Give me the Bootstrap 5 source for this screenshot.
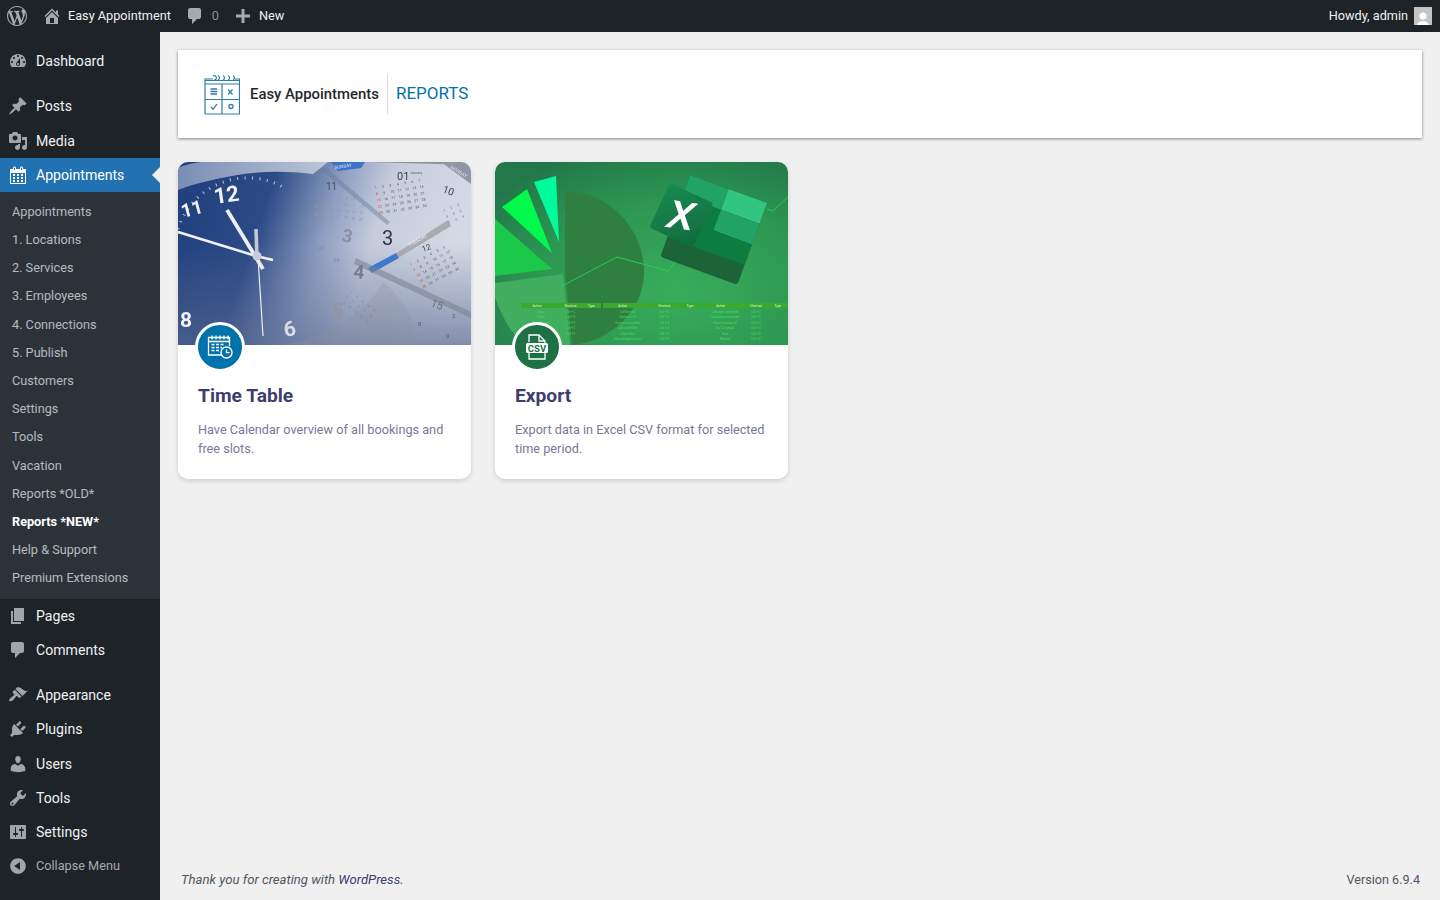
<!DOCTYPE html>
<html lang="en">
  <head>
    <meta charset="UTF-8" />
    <meta name="viewport" content="width=device-width, initial-scale=1.0" />
    <title>Reports - Easy Appointments</title>
    <link href="https://cdn.jsdelivr.net/npm/bootstrap@5.3.3/dist/css/bootstrap.min.css" rel="stylesheet" />
    <script src="https://cdn.jsdelivr.net/npm/bootstrap@5.3.3/dist/js/bootstrap.bundle.min.js"></script>
    <style>
      body { background: #f0f0f1; font-family: Roboto, "Liberation Sans", sans-serif; color: #3c434a; overflow: hidden; }
      .ico { fill: currentColor; flex: none; }

      .adminbar { height: 32px; background: #1d2327; color: #f0f0f1; font-size: 12.7px; }
      .adminbar .ico { color: #a7aaad; }
      .adminbar .muted { color: #8c9196; }
      .bar-wp { margin-left: 7px; }
      .bar-home { margin-left: 15px; }
      .bar-label { margin-left: 6px; }
      .bar-next { margin-left: 14px; }
      .bar-count { margin-left: 7px; }
      .avatar { width: 18px; height: 18px; background: #c4c4c4; overflow: hidden; margin-left: 6px; margin-right: 8px; }

      .page { height: 868px; }
      .sidebar { width: 160px; background: #1d2327; padding-top: 12px; }
      .menu { color: #f0f0f1; font-size: 14.1px; line-height: 1; }
      .menu-item { height: 34.25px; padding-left: 8px; gap: 8px; color: #f0f0f1; text-decoration: none; }
      .menu-item .ico { color: #a0a5aa; }
      .menu-item.current { background: #2271b1; color: #fff; }
      .menu-item.current .ico { color: #fff; }
      .menu-item.collapse-btn { color: #a7aaad; font-size: 12.7px; }
      .arrow { position: absolute; right: 0; top: 50%; margin-top: -8px; border: 8px solid transparent; border-right-color: #f0f0f1; border-left-width: 0; }
      .sep { height: 11px; }
      .submenu { background: #2c3338; padding: 5.9px 0 6.1px; }
      .submenu a { display: block; height: 28.2px; line-height: 28.2px; padding-left: 12px; font-size: 12.7px; color: rgba(240, 246, 252, .7); text-decoration: none; }
      .submenu a.on { color: #fff; font-weight: 700; }

      .content { padding: 18px 18px 0; min-width: 0; }
      .head-box { height: 88px; padding-left: 26px; margin-bottom: 24px; box-shadow: 0 1px 3px rgba(0, 0, 0, .45); }
      .brand { font-size: 14.9px; font-weight: 500; color: #23282d; padding-right: 8px; margin-left: 10px; line-height: 40px; border-right: 1px solid #dcdcde; }
      .head-title { font-size: 17px; color: #0073aa; margin-left: 8px; }

      .rep-card { border: 0; border-radius: 10px; height: 317px; overflow: hidden; box-shadow: 0 2px 5px rgba(0, 0, 0, .14); }
      .rep-pic { display: block; width: 293px; height: 183px; }
      .rep-badge { position: absolute; left: 17px; top: 160px; width: 50px; height: 50px; border: 3px solid #fff; }
      .bg-blue { background: #0073aa; }
      .bg-green { background: #1e7145; }
      .rep-body { padding: 39px 20px 0; }
      .rep-title { font-size: 19.2px; font-weight: 700; color: #3d3d6e; line-height: 24px; margin-bottom: 12px; }
      .rep-text { font-size: 12.7px; line-height: 19px; color: #78789a; margin: 0; }

      .foot { color: #50575e; padding: 0 2px 10px 3px; }
      .foot-note { font-size: 13.15px; }
      .foot-ver { font-size: 12.6px; }
      .foot a { color: #3d3d6e; text-decoration: none; }
    </style>
  </head>

  <body>
    <svg width="0" height="0" class="position-absolute">
      <symbol id="i-wp" viewBox="0 0 20 20"><path d="M20 10c0-5.51-4.49-10-10-10C4.48 0 0 4.49 0 10c0 5.52 4.48 10 10 10 5.51 0 10-4.48 10-10zM7.78 15.37L4.37 6.22c.55-.02 1.17-.08 1.17-.08.5-.06.44-1.13-.06-1.11 0 0-1.45.11-2.37.11-.18 0-.37 0-.58-.01C4.12 2.69 6.87 1.11 10 1.11c2.33 0 4.45.87 6.05 2.34-.68-.11-1.65.39-1.65 1.58 0 .74.45 1.36.9 2.1.35.61.55 1.36.55 2.46 0 1.49-1.4 5-1.4 5l-3.03-8.37c.54-.02.82-.17.82-.17.5-.05.44-1.25-.06-1.22 0 0-1.44.12-2.38.12-.87 0-2.33-.12-2.33-.12-.5-.03-.56 1.2-.06 1.22l.92.08 1.26 3.41zM17.41 10c.24-.64.74-1.87.43-4.25.7 1.29 1.05 2.71 1.05 4.25 0 3.29-1.73 6.24-4.4 7.78.97-2.59 1.94-5.2 2.92-7.78zM6.1 18.09C3.12 16.65 1.11 13.53 1.11 10c0-1.3.23-2.48.72-3.59C3.25 10.3 4.67 14.2 6.1 18.09zm4.03-6.63l2.58 6.98c-.86.29-1.76.45-2.71.45-.79 0-1.57-.11-2.29-.33.81-2.38 1.62-4.74 2.42-7.1z"/></symbol>
      <symbol id="i-home" viewBox="0 0 20 20"><path d="M16 8.5l1.53 1.53-1.06 1.06L10 4.62l-6.47 6.47-1.06-1.06L10 2.5l4 4v-2h2v4zm-6-2.46l6 5.99V18H4v-5.97zM12 17v-5H8v5h4z"/></symbol>
      <symbol id="i-comment" viewBox="0 0 20 20"><path d="M5 2h9c1.1 0 2 .9 2 2v7c0 1.1-.9 2-2 2h-2l-5 5v-5H5c-1.1 0-2-.9-2-2V4c0-1.1.9-2 2-2z"/></symbol>
      <symbol id="i-plus" viewBox="0 0 20 20"><path d="M17 8.5v3h-5.5V17h-3v-5.5H3v-3h5.5V3h3v5.5z"/></symbol>
      <symbol id="i-dash" viewBox="0 0 20 20"><path d="M3.76 16h12.48c1.1-1.37 1.76-3.11 1.76-5 0-4.42-3.58-8-8-8s-8 3.58-8 8c0 1.89.66 3.63 1.76 5zM10 4c.55 0 1 .45 1 1s-.45 1-1 1-1-.45-1-1 .45-1 1-1zM6 6c.55 0 1 .45 1 1s-.45 1-1 1-1-.45-1-1 .45-1 1-1zm8 0c.55 0 1 .45 1 1s-.45 1-1 1-1-.45-1-1 .45-1 1-1zm-5.37 5.55L12 7v6c0 1.1-.9 2-2 2s-2-.9-2-2c0-.57.24-1.08.63-1.45zM4 10c.55 0 1 .45 1 1s-.45 1-1 1-1-.45-1-1 .45-1 1-1zm12 0c.55 0 1 .45 1 1s-.45 1-1 1-1-.45-1-1 .45-1 1-1zm-5 3c0-.55-.45-1-1-1s-1 .45-1 1 .45 1 1 1 1-.45 1-1z"/></symbol>
      <symbol id="i-pin" viewBox="0 0 20 20"><path d="M10.44 3.02l1.82-1.82 6.36 6.35-1.83 1.82c-1.05-.68-2.48-.57-3.41.36l-.75.75c-.92.93-1.04 2.35-.35 3.41l-1.83 1.82-2.41-2.41-2.8 2.79c-.42.42-3.38 2.71-3.8 2.29s1.86-3.39 2.28-3.81l2.79-2.79L4.1 9.36l1.83-1.82c1.05.69 2.48.57 3.4-.36l.75-.75c.93-.92 1.05-2.35.36-3.41z"/></symbol>
      <symbol id="i-media" viewBox="0 0 20 20"><path d="M13 11V4c0-.55-.45-1-1-1h-1.67L9 1H5L3.67 3H2c-.55 0-1 .45-1 1v7c0 .55.45 1 1 1h10c.55 0 1-.45 1-1zM7 4.5c1.38 0 2.5 1.12 2.5 2.5S8.38 9.5 7 9.5 4.5 8.38 4.5 7 5.62 4.5 7 4.5zM14 6h5v10.5c0 1.38-1.12 2.5-2.5 2.5S14 17.88 14 16.5s1.12-2.5 2.5-2.5c.17 0 .34.02.5.05V9h-3V6zm-4 8.05V13h2v3.5c0 1.38-1.12 2.5-2.5 2.5S7 17.88 7 16.5 8.12 14 9.5 14c.17 0 .34.02.5.05z"/></symbol>
      <symbol id="i-cal" viewBox="0 0 20 20"><path d="M15 4h3v15H2V4h3V3c0-.41.15-.76.44-1.06.29-.29.65-.44 1.06-.44s.77.15 1.06.44c.29.3.44.65.44 1.06v1h4V3c0-.41.15-.76.44-1.06.29-.29.65-.44 1.06-.44s.77.15 1.06.44c.29.3.44.65.44 1.06v1zM6 5h1V3c0-.13-.05-.25-.15-.35-.09-.1-.21-.15-.35-.15s-.26.05-.35.15c-.1.1-.15.22-.15.35v2zm7 0h1V3c0-.13-.05-.25-.15-.35-.09-.1-.21-.15-.35-.15s-.26.05-.35.15c-.1.1-.15.22-.15.35v2zm4 13V8H3v10h14zM7 9v2H5V9h2zm2 0h2v2H9V9zm4 2V9h2v2h-2zm-6 1v2H5v-2h2zm2 0h2v2H9v-2zm4 2v-2h2v2h-2zm-6 1v2H5v-2h2zm4 2H9v-2h2v2zm4 0h-2v-2h2v2z"/></symbol>
      <symbol id="i-page" viewBox="0 0 20 20"><path d="M6 15V2h10v13H6zm-1 1h8v2H3V5h2v11z"/></symbol>
      <symbol id="i-brush" viewBox="0 0 20 20"><path d="M14.48 11.06L7.41 3.99l1.5-1.5c.5-.56 2.3-.47 3.51.32 1.21.8 1.43 1.28 2.91 2.1 1.18.64 2.45 1.26 4.45.85zm-.71.71L6.7 4.7 4.93 6.47c-.39.39-.39 1.02 0 1.41l1.06 1.06c.39.39.39 1.03 0 1.42-.6.6-1.43 1.11-2.21 1.69-.35.26-.7.53-1.01.84C1.43 13.23.91 15.24 1.2 16.2c.96.29 2.97-.23 4.31-1.57.31-.31.58-.66.85-1.02.58-.78 1.09-1.6 1.69-2.2.39-.39 1.02-.39 1.41 0l1.06 1.06c.39.39 1.02.39 1.41 0z"/></symbol>
      <symbol id="i-plug" viewBox="0 0 20 20"><path d="M13.11 4.36L9.87 7.6 8 5.73l3.24-3.24c.35-.34 1.05-.2 1.56.32.52.51.66 1.21.31 1.55zm-8 1.77l.91-1.12 9.01 9.01-1.19.84c-.71.71-2.63 1.16-3.82 1.16H6.14L4.9 17.26c-.59.59-1.54.59-2.12 0-.59-.58-.59-1.53 0-2.12l1.24-1.24v-3.88c0-1.13.4-3.19 1.09-3.89zm7.26 3.97l3.24-3.24c.34-.35 1.04-.21 1.55.31.52.51.66 1.21.31 1.55l-3.24 3.25z"/></symbol>
      <symbol id="i-user" viewBox="0 0 20 20"><path d="M10 9.25c-2.27 0-2.73-3.44-2.73-3.44C7 4.02 7.82 2 9.97 2c2.16 0 2.98 2.02 2.71 3.81 0 0-.41 3.44-2.68 3.44zm0 2.57L12.72 10c2.39 0 4.52 2.33 4.52 4.53v2.49s-3.65 1.13-7.24 1.13c-3.65 0-7.24-1.13-7.24-1.13v-2.49c0-2.25 1.94-4.48 4.47-4.48z"/></symbol>
      <symbol id="i-tool" viewBox="0 0 20 20"><path d="M16.68 9.77c-1.34 1.34-3.3 1.67-4.95.99l-5.41 6.52c-.99.99-2.59.99-3.58 0s-.99-2.59 0-3.57l6.52-5.42c-.68-1.65-.35-3.61.99-4.95 1.28-1.28 3.12-1.62 4.72-1.06l-2.89 2.89 2.82 2.82 2.86-2.87c.53 1.58.18 3.39-1.08 4.65zM3.81 16.21c.4.39 1.04.39 1.43 0 .4-.4.4-1.04 0-1.43-.39-.4-1.03-.4-1.43 0-.39.39-.39 1.03 0 1.43z"/></symbol>
      <symbol id="i-set" viewBox="0 0 20 20"><path d="M18 16V4c0-.55-.45-1-1-1H3c-.55 0-1 .45-1 1v12c0 .55.45 1 1 1h14c.55 0 1-.45 1-1zM8 11h1c.55 0 1 .45 1 1s-.45 1-1 1H8v1.5c0 .28-.22.5-.5.5s-.5-.22-.5-.5V13H6c-.55 0-1-.45-1-1s.45-1 1-1h1V5.5c0-.28.22-.5.5-.5s.5.22.5.5V11zm5-2h-1c-.55 0-1-.45-1-1s.45-1 1-1h1V5.5c0-.28.22-.5.5-.5s.5.22.5.5V7h1c.55 0 1 .45 1 1s-.45 1-1 1h-1v5.5c0 .28-.22.5-.5.5s-.5-.22-.5-.5V9z"/></symbol>
      <symbol id="i-back" viewBox="0 0 20 20"><path d="M10 2.16c4.33 0 7.84 3.51 7.84 7.84s-3.51 7.84-7.84 7.84S2.16 14.33 2.16 10 5.71 2.16 10 2.16zm2 11.72V6.12L6.18 9.97z"/></symbol>
    </svg>

    <div class="adminbar d-flex align-items-center justify-content-between">
      <div class="d-flex align-items-center">
        <svg class="ico bar-wp" width="20" height="20"><use href="#i-wp" /></svg>
        <svg class="ico bar-home" width="20" height="20"><use href="#i-home" /></svg>
        <span class="bar-label">Easy Appointment</span>
        <svg class="ico bar-next" width="20" height="20"><use href="#i-comment" /></svg>
        <span class="muted bar-count">0</span>
        <svg class="ico bar-next" width="20" height="20"><use href="#i-plus" /></svg>
        <span class="bar-label">New</span>
      </div>
      <div class="d-flex align-items-center">
        <span>Howdy, admin</span>
        <div class="avatar">
          <svg width="18" height="18"><circle cx="9" cy="7" r="3.6" fill="#fff" /><path d="M2.5 18c.4-4.4 3-6 6.500-6s6.100 1.600 6.500 6z" fill="#fff" /></svg>
        </div>
      </div>
    </div>

    <div class="page d-flex">
      <div class="sidebar flex-shrink-0 menu">
        <a class="menu-item d-flex align-items-center" href="#"><svg class="ico" width="20" height="20"><use href="#i-dash" /></svg>Dashboard</a>
        <div class="sep"></div>
        <a class="menu-item d-flex align-items-center" href="#"><svg class="ico" width="20" height="20"><use href="#i-pin" /></svg>Posts</a>
        <a class="menu-item d-flex align-items-center" href="#"><svg class="ico" width="20" height="20"><use href="#i-media" /></svg>Media</a>
        <a class="menu-item current d-flex align-items-center position-relative" href="#"><svg class="ico" width="20" height="20"><use href="#i-cal" /></svg>Appointments<span class="arrow"></span></a>
        <div class="submenu">
          <a href="#">Appointments</a>
          <a href="#">1. Locations</a>
          <a href="#">2. Services</a>
          <a href="#">3. Employees</a>
          <a href="#">4. Connections</a>
          <a href="#">5. Publish</a>
          <a href="#">Customers</a>
          <a href="#">Settings</a>
          <a href="#">Tools</a>
          <a href="#">Vacation</a>
          <a href="#">Reports *OLD*</a>
          <a href="#" class="on">Reports *NEW*</a>
          <a href="#">Help &amp; Support</a>
          <a href="#">Premium Extensions</a>
        </div>
        <a class="menu-item d-flex align-items-center" href="#"><svg class="ico" width="20" height="20"><use href="#i-page" /></svg>Pages</a>
        <a class="menu-item d-flex align-items-center" href="#"><svg class="ico" width="20" height="20"><use href="#i-comment" /></svg>Comments</a>
        <div class="sep"></div>
        <a class="menu-item d-flex align-items-center" href="#"><svg class="ico" width="20" height="20"><use href="#i-brush" /></svg>Appearance</a>
        <a class="menu-item d-flex align-items-center" href="#"><svg class="ico" width="20" height="20"><use href="#i-plug" /></svg>Plugins</a>
        <a class="menu-item d-flex align-items-center" href="#"><svg class="ico" width="20" height="20"><use href="#i-user" /></svg>Users</a>
        <a class="menu-item d-flex align-items-center" href="#"><svg class="ico" width="20" height="20"><use href="#i-tool" /></svg>Tools</a>
        <a class="menu-item d-flex align-items-center" href="#"><svg class="ico" width="20" height="20"><use href="#i-set" /></svg>Settings</a>
        <a class="menu-item collapse-btn d-flex align-items-center" href="#"><svg class="ico" width="20" height="20"><use href="#i-back" /></svg>Collapse Menu</a>
      </div>

      <div class="content flex-grow-1 d-flex flex-column">
        <div class="head-box bg-white d-flex align-items-center">
          <svg width="36" height="41" viewBox="0 0 36 41" fill="none" stroke="#2f7ea8" stroke-width="1.2">
            <path d="M1 40V6.500h35M35.500 6.500V40H1M1 10h34.500M18 10v30M1 25.500h34.500M1 6.500V5h8M31 5h4.500v1.500" />
            <path d="M9 2a2.200 2.200 0 1 1 1 4M14 1.500c2 1 2 3.500 0 4.500M19 1.500c2 1 2 3.500 0 4.500M24 1.500c2 1 2 3.500 0 4.500M29 1.500c2 1 2 3.500 0 4.500" />
            <path d="M6.500 15h6.500M6.500 17.500h6.500M6.500 20h6.500M24 15.500l4.500 5M28.500 15.500l-4.500 5M7 33l2 2.200 4-5" stroke-width="1.300" />
            <circle cx="27" cy="32.500" r="2" stroke-width="1.300" />
          </svg>
          <div class="brand">Easy Appointments</div>
          <div class="head-title">REPORTS</div>
        </div>

        <div class="row row-cols-4 g-4">
          <div class="col">
            <div class="card rep-card position-relative">
              <svg class="rep-pic" viewBox="0 0 293 183">
                <defs>
                  <linearGradient id="clockBase" x1="0" y1="0" x2="1" y2=".2">
                    <stop offset="0" stop-color="#1f3f7c" />
                    <stop offset=".33" stop-color="#2b4a86" />
                    <stop offset=".55" stop-color="#8d9cc0" />
                    <stop offset=".72" stop-color="#c5cddd" />
                    <stop offset="1" stop-color="#d4d9e3" />
                  </linearGradient>
                  <linearGradient id="clockShade" x1="0" y1="0" x2="0" y2="1">
                    <stop offset=".45" stop-color="#55678f" stop-opacity="0" />
                    <stop offset="1" stop-color="#55678f" stop-opacity=".65" />
                  </linearGradient>
                  <linearGradient id="clockBand" x1="0" y1="0" x2="1" y2="0">
                    <stop offset="0" stop-color="#7a8db5" />
                    <stop offset="1" stop-color="#bcc5d8" />
                  </linearGradient>
                  <filter id="soft"><feGaussianBlur stdDeviation=".35" /></filter>
                </defs>
                <rect width="293" height="183" fill="url(#clockBase)" />
                <rect width="293" height="183" fill="url(#clockShade)" />
                <path d="M0 6C6 3 14 1 23 0H150L135 12C110 9 88 9 66 12 40 16 18 21 0 28z" fill="url(#clockBand)" />
                <path d="M105 183C150 175 190 150 205 120 230 140 240 165 235 183z" fill="#8a8f9d" opacity=".25" />
                <g filter="url(#soft)">
                  <path d="M153 0H187L183 6 160 9z" fill="#3d73c4" />
                  <path d="M187 0H293V3L260 2z" fill="#8d93a1" />
                  <path d="M263 0H293V22z" fill="#8f96a5" />
                  <text x="157" y="7" font-size="4.500" fill="#dfe7f5" transform="rotate(-8 157 7)">SUNDAY</text>
                  <text x="272" y="6" font-size="4.500" fill="#dfe3ea" transform="rotate(32 272 6)">MONDAY</text>
                  <path d="M147 5L212 60 209 63 143 8z" fill="#6c7d9b" opacity=".45" />
                  <path d="M217 92L270 58 273 64 220 96z" fill="#a9abb0" />
                  <path d="M190 106L218 91 221 96 194 111z" fill="#3f78cc" />
                  <text x="231" y="85" font-size="5" fill="#e9ebef" transform="rotate(-29 231 85)">TUESDAY</text>
                  <path d="M178 96L293 150V156L176 102z" fill="#76808f" opacity=".55" />
                  <g font-family="Roboto, sans-serif" fill="#f2f3f6" font-weight="700">
                    <text x="37" y="42" font-size="22" transform="rotate(-8 37 42)">12</text>
                    <text x="5" y="56" font-size="19" transform="rotate(-15 5 56)">11</text>
                    <text x="2" y="165" font-size="21">8</text>
                    <text x="107" y="175" font-size="21" fill="#d8dce6" transform="rotate(-10 107 175)">6</text>
                  </g>
                  <g font-family="Roboto, sans-serif" font-weight="700" fill="#8a90a2">
                    <text x="135" y="54" font-size="18" transform="rotate(8 135 54)">2</text>
                    <text x="163" y="79" font-size="18" transform="rotate(12 163 79)">3</text>
                    <text x="175" y="116" font-size="19" fill="#767c8c" transform="rotate(5 175 116)">4</text>
                    <text x="153" y="155" font-size="21" fill="#94969d" transform="rotate(5 153 155)">5</text>
                  </g>
                  <g font-family="Roboto, sans-serif" fill="#3c4150">
                    <text x="148" y="28" font-size="10" fill="#4d5260">11</text>
                    <text x="219" y="18" font-size="11">01</text>
                    <text x="232" y="12" font-size="3.500" fill="#5c6170">January</text>
                    <text x="264" y="30" font-size="10" transform="rotate(20 264 30)">10</text>
                    <text x="204" y="83" font-size="20" fill="#2f3440">3</text>
                    <text x="245" y="90" font-size="8" transform="rotate(-20 245 90)">12</text>
                    <text x="110" y="42" font-size="6" fill="#5d6d92" transform="rotate(30 110 42)">14</text>
                    <text x="125" y="70" font-size="6" fill="#7783a0">22</text>
                    <text x="140" y="88" font-size="6" fill="#7f8aa5">23</text>
                    <text x="155" y="100" font-size="6" fill="#6f8ac0">24</text>
                    <text x="240" y="164" font-size="6" fill="#555b68">8</text>
                    <text x="268" y="176" font-size="6" fill="#555b68">9</text>
                    <text x="274" y="156" font-size="6" fill="#555b68">2</text>
                    <text x="252" y="144" font-size="11" fill="#6a6f7c" transform="rotate(20 252 144)">15</text>
                  </g>
                  <path d="M0 67A73 73 0 0 1 105 25" fill="none" stroke="#fff" stroke-opacity=".7" stroke-width="3" stroke-dasharray="1 6.430" />
                  <g fill="none" stroke-linecap="butt">
                    <path d="M0 70L78 94l17 4" stroke="#f0f1f4" stroke-width="2.800" />
                    <path d="M49 48L85 107" stroke="#eceef2" stroke-width="3.800" />
                    <path d="M78 67l1 30" stroke="#c3c8d2" stroke-width="3.600" />
                    <path d="M80 96l5 78" stroke="#eceef2" stroke-width="1.200" />
                  </g>
                  <circle cx="79" cy="94" r="4.500" fill="#c7ccd6" />
                  <g id="clockDays" font-family="Roboto, sans-serif"></g>
                </g>
              </svg>
              <div class="rep-badge bg-blue rounded-circle d-flex align-items-center justify-content-center">
                <svg width="26" height="26" viewBox="0 0 26 26" fill="none" stroke="#fff" stroke-width="1.300">
                  <path d="M15 21H1.500V3.500h21V12M1.500 7.500h21" />
                  <path d="M5 1.500v4M9 1.500v4M13 1.500v4M17 1.500v4M21 1.500v4" />
                  <path d="M4.500 10.500h3M9 10.500h3M13.500 10.500h3M4.500 13.500h3M9 13.500h3M13.500 13.500h1.500M4.500 16.500h3M9 16.500h3" stroke-width="1.700" />
                  <circle cx="19.500" cy="18.500" r="5.500" fill="#0073aa" stroke-width="1.400" />
                  <path d="M19.500 15.500v3.200h3" />
                </svg>
              </div>
              <div class="card-body rep-body">
                <h5 class="rep-title">Time Table</h5>
                <p class="rep-text">Have Calendar overview of all bookings and free slots.</p>
              </div>
            </div>
          </div>
          <div class="col">
            <div class="card rep-card position-relative">
              <svg class="rep-pic" viewBox="0 0 293 183">
                <defs>
                  <radialGradient id="xlBase" cx=".62" cy=".7" r=".8">
                    <stop offset="0" stop-color="#39ad5c" />
                    <stop offset=".6" stop-color="#2c9752" />
                    <stop offset="1" stop-color="#23784a" />
                  </radialGradient>
                  <linearGradient id="xlTile" x1="0" y1="0" x2="1" y2="1">
                    <stop offset="0" stop-color="#1a8a52" />
                    <stop offset="1" stop-color="#0f6b3d" />
                  </linearGradient>
                  <filter id="soft2"><feGaussianBlur stdDeviation=".3" /></filter>
                </defs>
                <rect width="293" height="183" fill="url(#xlBase)" />
                <g filter="url(#soft2)">
                  <path d="M70 29A81 81 0 0 1 149 111A81 74 0 0 1 77 183L70 113z" fill="#2f7f3f" />
                  <path d="M0 121L68 112 75 183H30C14 170 5 150 0 135z" fill="#40ad5e" />
                  <path d="M0 57L57 107 0 114z" fill="#1fc848" />
                  <path d="M7 45L32 27 57 91z" fill="#00f94c" />
                  <path d="M39 20L61 14 64 80z" fill="#00fb9a" />
                  <path d="M67 124L122 95 173 109 180 100M272 47L278 49 293 35" fill="none" stroke="#22cf55" stroke-width="1" />
                  <g transform="translate(195 13) rotate(20)">
                    <rect width="82" height="87" rx="3" fill="#1a6338" />
                    <rect width="41" height="22" fill="#21a366" />
                    <rect x="41" width="41" height="22" fill="#33c481" />
                    <rect y="22" width="41" height="22" fill="#107c41" />
                    <rect x="41" y="22" width="41" height="22" fill="#21a366" />
                    <rect y="44" width="82" height="22" fill="#107c41" />
                  </g>
                  <g transform="translate(175 21) rotate(25)">
                    <rect width="48" height="49" rx="3" fill="url(#xlTile)" />
                  </g>
                  <text x="186" y="67" font-family="Liberation Sans, sans-serif" font-size="40" font-weight="700" font-style="italic" fill="#fff" text-anchor="middle" transform="rotate(8 186 54)">X</text>
                  <g id="xlSheet" font-family="Roboto, sans-serif" text-anchor="middle"></g>
                </g>
              </svg>
              <div class="rep-badge bg-green rounded-circle d-flex align-items-center justify-content-center">
                <svg width="24" height="26" viewBox="0 0 24 26" fill="none" stroke="#fff" stroke-width="1.300">
                  <path d="M4 8V1h10l6 6v2M14 1v6h6M4 19v6h16v-6" />
                  <rect x="1" y="9" width="22" height="10" rx="1.500" fill="#fff" stroke="none" />
                  <text x="12" y="17.500" font-family="Roboto, sans-serif" font-size="9.500" font-weight="700" fill="#1e7145" stroke="none" text-anchor="middle">CSV</text>
                </svg>
              </div>
              <div class="card-body rep-body">
                <h5 class="rep-title">Export</h5>
                <p class="rep-text">Export data in Excel CSV format for selected time period.</p>
              </div>
            </div>
          </div>
        </div>

        <div class="foot mt-auto d-flex justify-content-between align-items-baseline">
          <span class="fst-italic foot-note">Thank you for creating with <a href="#">WordPress</a>.</span>
          <span class="foot-ver">Version 6.9.4</span>
        </div>
      </div>
    </div>

    <script>
      // tiny calendar pages in the clock picture
      const NS = "http://www.w3.org/2000/svg";
      const addText = (parent, txt, x, y, size, fill) => {
        const t = document.createElementNS(NS, "text");
        t.setAttribute("x", x);
        t.setAttribute("y", y);
        t.setAttribute("font-size", size);
        t.setAttribute("fill", fill);
        t.textContent = txt;
        parent.appendChild(t);
      };

      const month = (x, y, deg, rows, cols, fill, red) => {
        const g = document.createElementNS(NS, "g");
        g.setAttribute("transform", `translate(${x} ${y}) rotate(${deg})`);
        let n = 1;
        for (let r = 0; r < rows; r++) {
          for (let c = 0; c < cols; c++) {
            addText(g, n, c * 7.4, r * 6.4, 3.6, c == 0 && red ? "#d9432f" : fill);
            n++;
          }
        }
        document.getElementById("clockDays").appendChild(g);
      };

      month(197, 27, -9, 5, 7, "#4f5563", true);
      month(233, 104, -28, 5, 6, "#565c6a", true);
      month(153, 36, 6, 4, 5, "#8a93a8", false);
      month(266, 50, -22, 3, 3, "#5f7cc0", false);
      month(172, 130, 40, 3, 5, "#7f8592", false);

      // cheat sheet strip in the export picture
      const sheet = document.getElementById("xlSheet");
      const blocks = [
        [26, 80, ["Copy", "Paste", "Paste special", "Cut", "Undo"]],
        [108, 99, ["Cell format", "Format as %", "Format as number", "Add AutoFilter", "Clear Filter", "Show Dropdown List"]],
        [209, 84, ["Calculate worksheet", "Calculate active sheet", "Show formulas all", "Go To Special", "Find", "Replace"]]
      ];
      blocks.forEach(([x, w, labels]) => {
        const bar = document.createElementNS(NS, "rect");
        bar.setAttribute("x", x);
        bar.setAttribute("y", 141);
        bar.setAttribute("width", w);
        bar.setAttribute("height", 5);
        bar.setAttribute("fill", "#3aa82f");
        sheet.appendChild(bar);
        addText(sheet, "Action", x + w * .2, 145, 3.2, "#d5f5c8");
        addText(sheet, "Shortcut", x + w * .62, 145, 3.2, "#d5f5c8");
        addText(sheet, "Type", x + w * .88, 145, 3.2, "#d5f5c8");
        labels.forEach((l, i) => {
          addText(sheet, l, x + w * .25, 151 + i * 5.4, 3, "#4fd65f");
          addText(sheet, "Ctrl + " + "CVXZYF"[i], x + w * .62, 151 + i * 5.4, 3, "#4fd65f");
        });
      });
    </script>
  </body>
</html>
